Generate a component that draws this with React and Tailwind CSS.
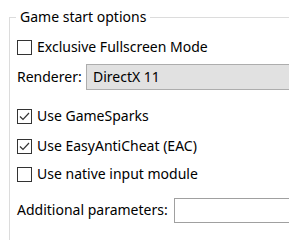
import React from 'react';

const Check = ({ checked, label }) => (
  <label className="flex items-center gap-[5px] whitespace-nowrap">
    <span className="w-[15px] h-[15px] border border-[#333333] bg-white flex items-center justify-center shrink-0">
      {checked && (
        <svg width="13" height="13" viewBox="0 0 13 13">
          <path d="M2 6.5 L5 9.5 L11 3" fill="none" stroke="#333333" strokeWidth="1.2" />
        </svg>
      )}
    </span>
    <span>{label}</span>
  </label>
);

export default function App() {
  return (
    <div
      className="w-[289px] h-[240px] overflow-hidden bg-white text-black text-[14px] leading-[20px]"
      style={{ fontFamily: '"Noto Sans", "Segoe UI", sans-serif' }}
    >
      <fieldset className="ml-[9px] mt-[7px] w-[300px] h-[260px] border border-[#dcdcdc] p-0">
        <legend className="ml-[6px] px-[4px] whitespace-nowrap">Game start options</legend>

        <div className="pl-[7px] flex flex-col">
          {/* Exclusive fullscreen */}
          <div className="h-[26px] mt-[7px] flex items-center">
            <Check label="Exclusive Fullscreen Mode" />
          </div>

          {/* Renderer */}
          <div className="h-[26px] mt-[4px] flex items-center">
            <span className="w-[69px] shrink-0">Renderer:</span>
            <div className="flex-1 h-[26px] bg-[#e1e1e1] border border-[#adadad] flex items-center pl-[6px]">
              DirectX 11
            </div>
          </div>

          <div className="h-[26px] mt-[13px] flex items-center">
            <Check checked label="Use GameSparks" />
          </div>

          <div className="h-[26px] mt-[4px] flex items-center">
            <Check checked label="Use EasyAntiCheat (EAC)" />
          </div>

          <div className="h-[26px] mt-[2px] flex items-center">
            <Check label="Use native input module" />
          </div>

          {/* Additional parameters */}
          <div className="h-[26px] mt-[10px] flex items-center">
            <span className="w-[157px] shrink-0 whitespace-nowrap">Additional parameters:</span>
            <div className="flex-1 h-[25px] bg-white border border-[#a0a0a0]" />
          </div>
        </div>
      </fieldset>
    </div>
  );
}
